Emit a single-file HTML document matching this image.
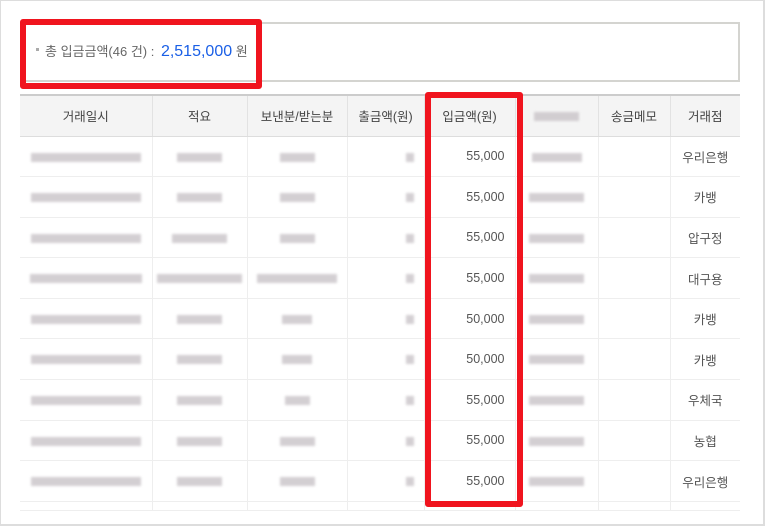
<!DOCTYPE html>
<html><head><meta charset="utf-8"><style>
*{margin:0;padding:0;box-sizing:border-box}
body{width:765px;height:526px;background:#fff;position:relative;overflow:hidden;font-family:"Liberation Sans","Noto Sans CJK KR",sans-serif;color:#555;font-size:12px}
.frame{position:absolute;left:0;top:0;width:765px;height:526px;border:1px solid #ddd;border-right-width:2px;border-bottom-width:2px}
.sum{position:absolute;left:20px;top:22px;width:720px;height:60px;border:2px solid #d4d4d0;border-left:none}
.sumtxt{position:absolute;left:36px;top:41px;font-size:13px;color:#666;white-space:nowrap}
.sumtxt .dot{display:inline-block;width:3px;height:3px;background:#aaa;vertical-align:middle;margin-right:6px;position:relative;top:-3px}
.sumtxt b{font-weight:normal;color:#1a5fe6;font-size:16px;margin-left:3px}
.red{position:absolute;border:6px solid #f0141e;border-radius:3px}
table{position:absolute;left:20px;top:94px;border-collapse:collapse;width:720px;table-layout:fixed}
th{height:41px;background:#f4f4f4;font-weight:normal;border-top:2px solid #ccc;border-bottom:1px solid #ddd;border-left:1px solid #e2e2e2;color:#444;font-size:12.5px}
th:first-child,td:first-child{border-left:none}
td{height:40.6px;border-bottom:1px solid #eee;border-left:1px solid #eee;text-align:center;font-size:12.5px}
td.r{text-align:right;padding-right:10px}
.bl{display:inline-block;height:9px;background:#c9c4c8;filter:blur(1.3px);opacity:.8;vertical-align:middle}
</style></head><body>
<div class="frame"></div>
<div class="sum"></div>
<div class="sumtxt"><span class="dot"></span>총 입금금액(46 건) : <b>2,515,000</b> 원</div>
<table>
<colgroup><col style="width:132px"><col style="width:95px"><col style="width:100px"><col style="width:77px"><col style="width:91px"><col style="width:83px"><col style="width:72px"><col style="width:70px"></colgroup>
<tr><th>거래일시</th><th>적요</th><th>보낸분/받는분</th><th>출금액(원)</th><th>입금액(원)</th><th><span class="bl" style="width:45px"></span></th><th>송금메모</th><th>거래점</th></tr>
<tr><td><span class="bl" style="width:110px"></span></td><td><span class="bl" style="width:45px"></span></td><td><span class="bl" style="width:35px"></span></td><td class="r"><span class="bl" style="width:8px"></span></td><td class="r">55,000</td><td><span class="bl" style="width:50px"></span></td><td></td><td>우리은행</td></tr>
<tr><td><span class="bl" style="width:110px"></span></td><td><span class="bl" style="width:45px"></span></td><td><span class="bl" style="width:35px"></span></td><td class="r"><span class="bl" style="width:8px"></span></td><td class="r">55,000</td><td><span class="bl" style="width:55px"></span></td><td></td><td>카뱅</td></tr>
<tr><td><span class="bl" style="width:110px"></span></td><td><span class="bl" style="width:55px"></span></td><td><span class="bl" style="width:35px"></span></td><td class="r"><span class="bl" style="width:8px"></span></td><td class="r">55,000</td><td><span class="bl" style="width:55px"></span></td><td></td><td>압구정</td></tr>
<tr><td><span class="bl" style="width:112px"></span></td><td><span class="bl" style="width:85px"></span></td><td><span class="bl" style="width:80px"></span></td><td class="r"><span class="bl" style="width:8px"></span></td><td class="r">55,000</td><td><span class="bl" style="width:55px"></span></td><td></td><td>대구용</td></tr>
<tr><td><span class="bl" style="width:110px"></span></td><td><span class="bl" style="width:45px"></span></td><td><span class="bl" style="width:30px"></span></td><td class="r"><span class="bl" style="width:8px"></span></td><td class="r">50,000</td><td><span class="bl" style="width:55px"></span></td><td></td><td>카뱅</td></tr>
<tr><td><span class="bl" style="width:110px"></span></td><td><span class="bl" style="width:45px"></span></td><td><span class="bl" style="width:30px"></span></td><td class="r"><span class="bl" style="width:8px"></span></td><td class="r">50,000</td><td><span class="bl" style="width:55px"></span></td><td></td><td>카뱅</td></tr>
<tr><td><span class="bl" style="width:110px"></span></td><td><span class="bl" style="width:45px"></span></td><td><span class="bl" style="width:25px"></span></td><td class="r"><span class="bl" style="width:8px"></span></td><td class="r">55,000</td><td><span class="bl" style="width:55px"></span></td><td></td><td>우체국</td></tr>
<tr><td><span class="bl" style="width:110px"></span></td><td><span class="bl" style="width:45px"></span></td><td><span class="bl" style="width:35px"></span></td><td class="r"><span class="bl" style="width:8px"></span></td><td class="r">55,000</td><td><span class="bl" style="width:55px"></span></td><td></td><td>농협</td></tr>
<tr><td><span class="bl" style="width:110px"></span></td><td><span class="bl" style="width:45px"></span></td><td><span class="bl" style="width:35px"></span></td><td class="r"><span class="bl" style="width:8px"></span></td><td class="r">55,000</td><td><span class="bl" style="width:55px"></span></td><td></td><td>우리은행</td></tr>
<tr><td style="height:9px"></td><td style="height:9px"></td><td style="height:9px"></td><td style="height:9px"></td><td style="height:9px"></td><td style="height:9px"></td><td style="height:9px"></td><td style="height:9px"></td></tr>
</table>
<div class="red" style="left:20px;top:19px;width:242px;height:70px"></div>
<div class="red" style="left:425px;top:92px;width:98px;height:415px"></div>
</body></html>
